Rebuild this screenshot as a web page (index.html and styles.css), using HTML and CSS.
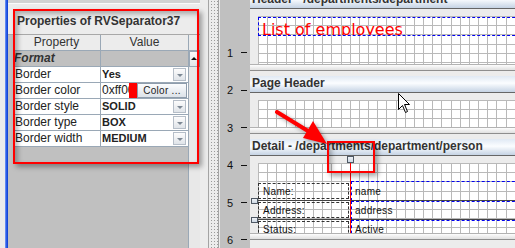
FILE: index.html
```html
<!DOCTYPE html>
<html>
<head>
<meta charset="utf-8">
<title>Properties of RVSeparator37</title>
<link rel="stylesheet" href="styles.css">
</head>
<body>
<div class="app">
  <div class="edge"></div>
  <div class="blue"></div>

  <div class="props">
    <div class="props-top"></div>
    <div class="props-title">Properties of RVSeparator37</div>
    <div class="props-body">
      <div class="pad"></div>
      <div class="sheet">
        <div class="row head"><div class="c1">Property</div><div class="c2">Value</div></div>
        <div class="row cat"><div class="c1">Format</div><div class="c2"></div></div>
        <div class="row"><div class="c1">Border</div><div class="c2"><span class="val">Yes</span><i class="combo"></i></div></div>
        <div class="row"><div class="c1">Border color</div><div class="c2 colorcell"><span class="hex">0xff0000</span><i class="swatch"></i><span class="btn">Color ...</span></div></div>
        <div class="row"><div class="c1">Border style</div><div class="c2"><span class="val">SOLID</span><i class="combo"></i></div></div>
        <div class="row"><div class="c1">Border type</div><div class="c2"><span class="val">BOX</span><i class="combo"></i></div></div>
        <div class="row"><div class="c1">Border width</div><div class="c2"><span class="val">MEDIUM</span><i class="combo"></i></div></div>
      </div>
      <div class="vscroll">
        <div class="corner"></div>
        <div class="up"></div>
      </div>
    </div>
  </div>

  <div class="split">
    <div class="s-plain"></div>
    <div class="s-line"></div>
    <div class="s-dots"></div>
    <div class="s-line"></div>
  </div>

  <div class="ruler">
    <div class="mark"><b>1</b><i></i></div>
    <div class="mark"><b>2</b><i></i></div>
    <div class="mark"><b>3</b><i></i></div>
    <div class="mark"><b>4</b><i></i></div>
    <div class="mark"><b>5</b><i></i></div>
    <div class="mark"><b>6</b><i></i></div>
  </div>

  <div class="report">
    <div class="band first">Header - /departments/department</div>
    <div class="sec-body">
      <div class="grid g1">
        <div class="title-box"><span>List of employees</span></div>
      </div>
    </div>
    <div class="bar"></div>

    <div class="band">Page Header</div>
    <div class="sec-body">
      <div class="grid g2"></div>
    </div>
    <div class="bar"></div>

    <div class="band">Detail - /departments/department/person</div>
    <div class="sec-body">
      <div class="grid g3">
        <div class="lbl l1">Name:</div>
        <div class="lbl l2">Address:</div>
        <div class="lbl l3">Status:</div>
        <div class="fld f1">name</div>
        <div class="fld f2">address</div>
        <div class="fld f3">Active</div>
        <div class="hsep s1"></div>
        <div class="hsep s2"></div>
        <div class="vsep"></div>
      </div>
      <div class="handle h-top"></div>
      <div class="handle h-l1"></div>
      <div class="handle h-l2"></div>
    </div>
    <div class="bar"></div>
  </div>

  <div class="callout co-props"></div>
  <div class="callout co-sep"></div>

  <svg class="arrow" width="70" height="48" viewBox="0 0 70 48">
    <line x1="7" y1="7" x2="38" y2="26" stroke="#ff0000" stroke-width="4" stroke-linecap="round"/>
    <polygon points="57,39 43,16 33,33" fill="#ff0000"/>
  </svg>

  <svg class="cursor" width="14" height="22" viewBox="0 0 14 22">
    <path d="M1.5 1.5 L1.5 17.5 L5.5 13.5 L8.5 20.5 L10.5 19.5 L7.5 12.5 L12.5 12.5 Z" fill="#fff" stroke="#000" stroke-width="1" stroke-linejoin="miter"/>
  </svg>
</div>
</body>
</html>
```

FILE: styles.css
```css
* { box-sizing: border-box; margin: 0; padding: 0; }
html, body { width: 515px; height: 248px; overflow: hidden; }
body {
  font-family: "Liberation Sans", Arial, sans-serif;
  background: #ececec;
  color: #222;
}
.app {
  position: relative;
  display: flex;
  width: 515px;
  height: 248px;
  overflow: hidden;
}

/* left edge */
.edge { width: 5px; flex: none; background: #ececec; }
.blue { width: 3px; flex: none; background: linear-gradient(90deg, #7b9ef2, #2a5ce8 50%, #0b3bcc); }

/* properties panel */
.props { width: 192px; flex: none; display: flex; flex-direction: column; }
.props-top { height: 10px; flex: none; background: linear-gradient(#d2d2d2 0 3px, #fafafa 3px 4px, #ececec 4px); }
.props-title {
  height: 25px; flex: none;
  line-height: 22px;
  padding-left: 9px;
  font-size: 12px; font-weight: bold; color: #333;
  background: #ececec;
  border-bottom: 1px solid #a8a8a8;
  white-space: nowrap;
}
.props-body { flex: 1; display: flex; background: #c0c0c0; }
.pad { width: 5px; flex: none; }
.sheet { width: 176px; flex: none; display: flex; flex-direction: column; border-right: 1px solid #9aa8b6; }
.row { display: flex; height: 16px; flex: none; border-bottom: 1px solid #9aa8b6; font-size: 12px; line-height: 15px; }
.c1 { width: 88px; flex: none; border-right: 1px solid #9aa8b6; padding-left: 2px; white-space: nowrap; overflow: hidden; background: #fff; color: #222; }
.c2 { flex: 1; position: relative; padding-left: 1px; background: #fff; white-space: nowrap; }
.head .c1, .head .c2 { background: #ececec; text-align: center; padding: 0; color: #333; }
.cat .c1, .cat .c2 { background: #c0c0c0; }
.cat .c1 { font-weight: bold; font-style: italic; color: #333; padding-left: 1px; }
.val { font-size: 11px; font-weight: bold; color: #222; }
.combo {
  position: absolute; left: 72px; top: 1px;
  width: 13px; height: 13px;
  border: 1px solid #b6bec8;
  background: linear-gradient(#fcfcfc, #e0e4e9);
}
.combo::after {
  content: ""; position: absolute; left: 3px; top: 5px;
  border-left: 3px solid transparent; border-right: 3px solid transparent;
  border-top: 3px solid #7d8894;
}
.colorcell { display: flex; padding-left: 1px; }
.hex { width: 27px; flex: none; overflow: hidden; font-size: 12px; color: #222; }
.swatch { width: 8px; flex: none; background: #ff0000; }
.btn {
  width: 50px; flex: none;
  border: 1px solid #8e9cab;
  background: linear-gradient(#fbfcfd, #dce2e9);
  font-size: 10px; letter-spacing: 0.3px; line-height: 13px;
  text-align: center; color: #222;
  overflow: hidden;
}
.vscroll { width: 11px; flex: none; background: #e8e8e8; display: flex; flex-direction: column; }
.corner { height: 16px; flex: none; background: #ececec; border-bottom: 1px solid #9aa8b6; }
.up {
  height: 16px; flex: none; position: relative;
  border: 1px solid #9aa8b6;
  background: linear-gradient(#fbfbfb, #e2e6ea);
}
.up::after {
  content: ""; position: absolute; left: 1px; top: 5px;
  border-left: 3px solid transparent; border-right: 3px solid transparent;
  border-bottom: 3px solid #111;
}

/* splitter */
.split { width: 20px; flex: none; display: flex; background: #ececec; }
.s-plain { width: 8px; flex: none; }
.s-line { width: 1px; flex: none; background: #a4a4a4; }
.s-dots {
  width: 9px; flex: none;
  background-color: #ececec;
  background-image: radial-gradient(circle, #9a9a9a 0.7px, transparent 0.9px);
  background-size: 3px 3px;
  background-position: 1px 0;
}

/* ruler */
.ruler {
  width: 30px; flex: none;
  background: #c0c0c0;
  padding-top: 34.3px;
  display: flex; flex-direction: column;
}
.mark { height: 37.4px; flex: none; display: flex; align-items: center; padding-left: 7px; font-size: 11px; color: #111; }
.mark b { font-weight: normal; width: 14px; flex: none; }
.mark i { width: 6px; height: 1px; background: #111; flex: none; }

/* report designer */
.report { flex: 1; display: flex; flex-direction: column; overflow: hidden; background: #ececec; }
.band {
  flex: none; height: 17px;
  border-bottom: 1px solid #666;
  background: linear-gradient(#e0e9f4, #fbfdff 45%, #c5d3e4);
  font-size: 12px; font-weight: bold; color: #333;
  line-height: 15px; padding-left: 2px;
  white-space: nowrap;
}
.band.first { margin-top: -8px; }
.sec-body { position: relative; flex: none; padding: 7px 0 0 8px; }
.grid {
  position: relative; overflow: hidden;
  background-color: #fff;
  background-image:
    repeating-linear-gradient(90deg, #b9b9b9 0 1px, transparent 1px 9.17px),
    repeating-linear-gradient(180deg, #b9b9b9 0 1px, transparent 1px 9.17px);
}
.g1 { height: 48px; }
.g2 { height: 27px; }
.g3 { height: 70px; }
.bar {
  flex: none; height: 7px;
  border-top: 1px solid #b2b2b2; border-bottom: 1px solid #8e8e8e;
  background: linear-gradient(#fdfdfd, #e0e0e0);
  margin-bottom: 5px;
}

.title-box {
  position: absolute; left: 0; top: 1px; right: -20px; height: 19px;
  border: 1px dashed #0000ee;
  overflow: hidden;
  padding: 3px 0 0 3px;
  font-family: "DejaVu Sans", "Liberation Sans", sans-serif;
  font-size: 16px; line-height: 18px;
  color: #ff0000;
  white-space: nowrap;
}

.lbl, .fld {
  position: absolute;
  font-size: 10px; letter-spacing: 0.3px; color: #111;
  white-space: nowrap;
  display: flex; align-items: center;
}
.lbl { left: 0; width: 91px; height: 16px; border: 1px dashed #333; padding-left: 4px; }
.l1 { top: 20px; }
.l2 { top: 39px; }
.l3 { top: 58px; }
.fld { left: 93px; right: -20px; border: 1px dashed #0000ee; padding-left: 3px; }
.f1 { top: 18px; height: 20px; }
.f2 { top: 38px; height: 19px; }
.f3 { top: 57px; height: 19px; }
.hsep { position: absolute; left: 0; right: 0; height: 1px; background: #444; }
.s1 { top: 37px; }
.s2 { top: 56px; }
.vsep { position: absolute; left: 92px; top: 0; bottom: 0; width: 1px; background: #ff0000; }
.handle {
  position: absolute; width: 7px; height: 7px;
  border: 1px solid #4e5864;
  background: linear-gradient(#eef2f7, #cdd8e4);
}
.h-top { left: 97px; top: 0; }
.h-l1 { left: 1px; top: 42px; height: 6px; }
.h-l2 { left: 1px; top: 61px; height: 6px; }

/* overlays */
.callout {
  position: absolute;
  border: 2px solid #ff0000;
  box-shadow: 3px 3px 5px rgba(0, 0, 0, 0.35), inset 3px 3px 5px rgba(0, 0, 0, 0.28);
}
.co-props { left: 13px; top: 9px; width: 186px; height: 155px; }
.co-sep { left: 327px; top: 141px; width: 48px; height: 32px; }
.arrow {
  position: absolute; left: 270px; top: 105px;
  filter: drop-shadow(2px 2px 2px rgba(0, 0, 0, 0.35));
}
.cursor { position: absolute; left: 397px; top: 92px; }
```
